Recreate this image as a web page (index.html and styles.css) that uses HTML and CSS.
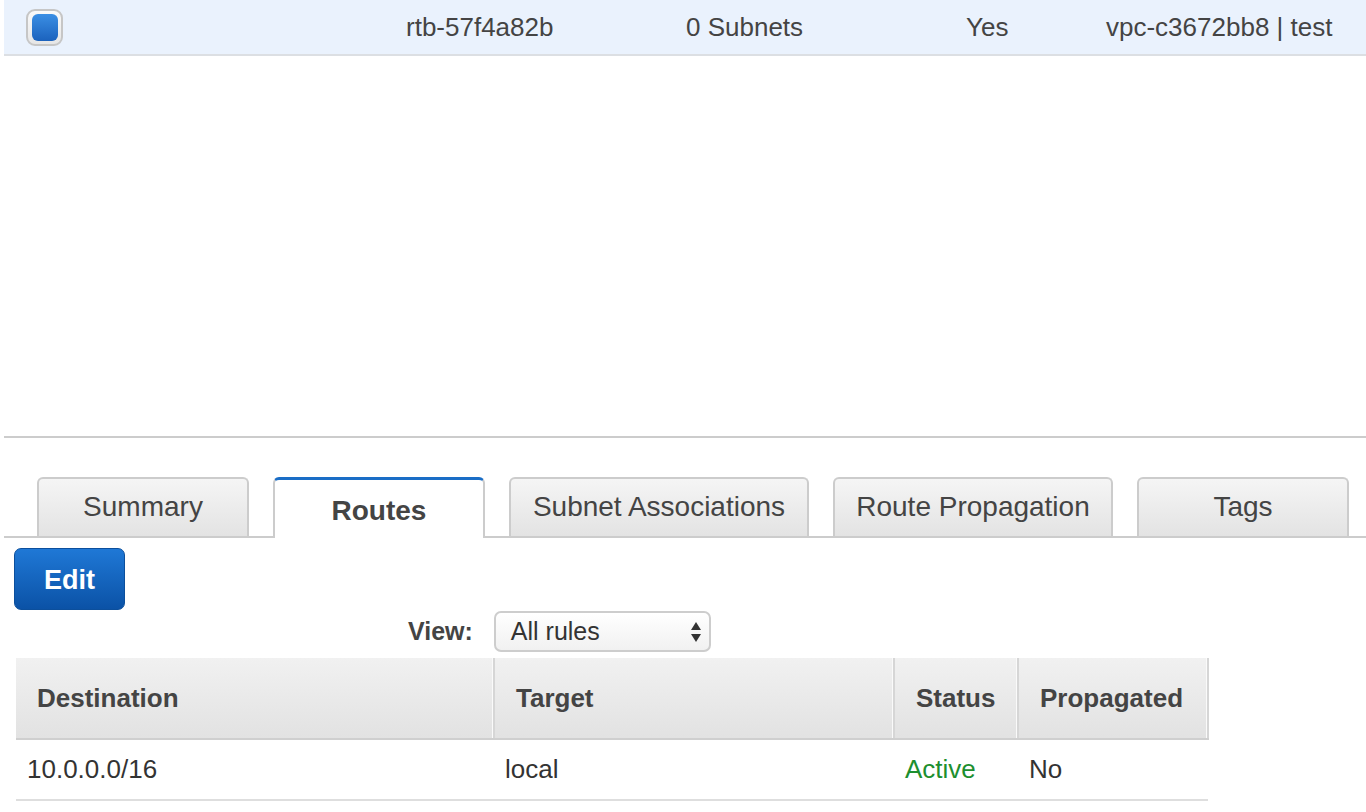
FILE: index.html
```html
<!DOCTYPE html>
<html>
<head>
<meta charset="utf-8">
<link rel="stylesheet" href="styles.css">
</head>
<body>
<div class="page">
  <div class="toprow">
    <div class="cell cb"><span class="checkbox"><span class="checkbox-inner"></span></span></div>
    <div class="cell">rtb-57f4a82b</div>
    <div class="cell">0 Subnets</div>
    <div class="cell">Yes</div>
    <div class="cell">vpc-c3672bb8 | test</div>
  </div>

  <div class="details">
    <div class="tabs">
      <div class="tab w212">Summary</div>
      <div class="tab w212 active">Routes</div>
      <div class="tab w300">Subnet Associations</div>
      <div class="tab w280">Route Propagation</div>
      <div class="tab w212">Tags</div>
    </div>

    <div class="toolbar">
      <button class="btn-edit">Edit</button>
    </div>

    <div class="viewrow">
      <span class="view-label">View:</span>
      <div class="select">
        <span>All rules</span>
        <svg class="arrows" width="12" height="22" viewBox="0 0 12 22"><path d="M6 1 L11 9 L1 9 Z" fill="#333"/><path d="M1 13 L11 13 L6 21 Z" fill="#333"/></svg>
      </div>
    </div>

    <table class="routes">
      <colgroup>
        <col class="c1"><col class="c2"><col class="c3"><col class="c4">
      </colgroup>
      <thead>
        <tr><th>Destination</th><th>Target</th><th>Status</th><th>Propagated</th></tr>
      </thead>
      <tbody>
        <tr><td>10.0.0.0/16</td><td>local</td><td class="active-status">Active</td><td>No</td></tr>
      </tbody>
    </table>
  </div>
</div>
</body>
</html>
```

FILE: styles.css
```css
html, body {
  margin: 0;
  padding: 0;
  background: #fff;
}
body {
  font-family: "Liberation Sans", Arial, Helvetica, sans-serif;
  color: #444;
}
.page {
  padding-left: 4px;
}
.toprow {
  display: grid;
  grid-template-columns: 402px 280px 280px 140px 1fr;
  align-items: center;
  height: 54px;
  background: #eaf2fd;
  border-bottom: 2px solid #dcdfe3;
  font-size: 26px;
  color: #444;
}
.cell.cb {
  padding-left: 22px;
  display: flex;
  align-items: center;
}
.checkbox {
  box-sizing: border-box;
  width: 37px;
  height: 37px;
  border: 2px solid #c6c6c6;
  border-radius: 9px;
  background: linear-gradient(#fafafa, #e6e6e6);
  display: flex;
  align-items: center;
  justify-content: center;
}
.checkbox-inner {
  width: 26px;
  height: 27px;
  border-radius: 6px;
  background: linear-gradient(#3b8fe4, #1b62bd);
}
.details {
  margin-top: 380px;
  border-top: 2px solid #cccccc;
}
.tabs {
  display: flex;
  align-items: flex-end;
  gap: 24px;
  padding: 39px 0 0 33px;
  border-bottom: 2px solid #cccccc;
  height: 59px;
}
.tab {
  box-sizing: border-box;
  height: 59px;
  border: 2px solid #cccccc;
  border-bottom: none;
  border-radius: 6px 6px 0 0;
  background: linear-gradient(#f5f5f5, #e3e3e3);
  display: flex;
  align-items: center;
  justify-content: center;
  padding-bottom: 1px;
  font-size: 28px;
  color: #444;
}
.w212 { width: 212px; }
.w280 { width: 280px; }
.w300 { width: 300px; }
.tab.active {
  height: 61px;
  margin-bottom: -2px;
  background: #fff;
  border-top: 3px solid #1a6dc6;
  font-weight: bold;
  padding-top: 4px;
}
.toolbar {
  padding: 10px 0 0 10px;
}
.btn-edit {
  box-sizing: border-box;
  width: 111px;
  height: 62px;
  border: 1px solid #0c4f9c;
  border-radius: 7px;
  background: linear-gradient(#1f78d6, #0b52a6);
  color: #fff;
  font-family: "Liberation Sans", Arial, sans-serif;
  font-weight: bold;
  font-size: 27px;
  padding: 2px 0 0 0;
  display: block;
}
.viewrow {
  display: flex;
  align-items: center;
  margin-top: 1px;
  padding-left: 404px;
  gap: 21px;
}
.view-label {
  font-weight: bold;
  font-size: 25px;
  color: #444;
}
.select {
  box-sizing: border-box;
  width: 217px;
  height: 41px;
  border: 2px solid #cdcdcd;
  border-radius: 7px;
  background: linear-gradient(#ffffff, #f1f1f1);
  display: flex;
  align-items: center;
  justify-content: space-between;
  padding: 0 7px 0 15px;
  font-size: 25px;
  color: #333;
}
.arrows {
  display: block;
}
.routes {
  margin: 6px 0 0 12px;
  border-collapse: collapse;
  width: 1192px;
  table-layout: fixed;
  font-size: 26px;
}
.c1 { width: 478px; }
.c2 { width: 400px; }
.c3 { width: 124px; }
.c4 { width: 190px; }
.routes th {
  height: 81px;
  box-sizing: border-box;
  text-align: left;
  padding: 0 0 0 21px;
  font-weight: bold;
  color: #444;
  background: linear-gradient(#f1f1f1, #e2e2e2);
  border-bottom: 2px solid #cfcfcf;
  border-right: 2px solid #d6d6d6;
  box-shadow: inset -1px 0 0 #fafafa;
}
.routes td {
  height: 61px;
  box-sizing: border-box;
  padding: 0 0 0 11px;
  border-bottom: 2px solid #dedede;
  color: #333;
}
.routes td.active-status {
  color: #1d8f2f;
}
```
